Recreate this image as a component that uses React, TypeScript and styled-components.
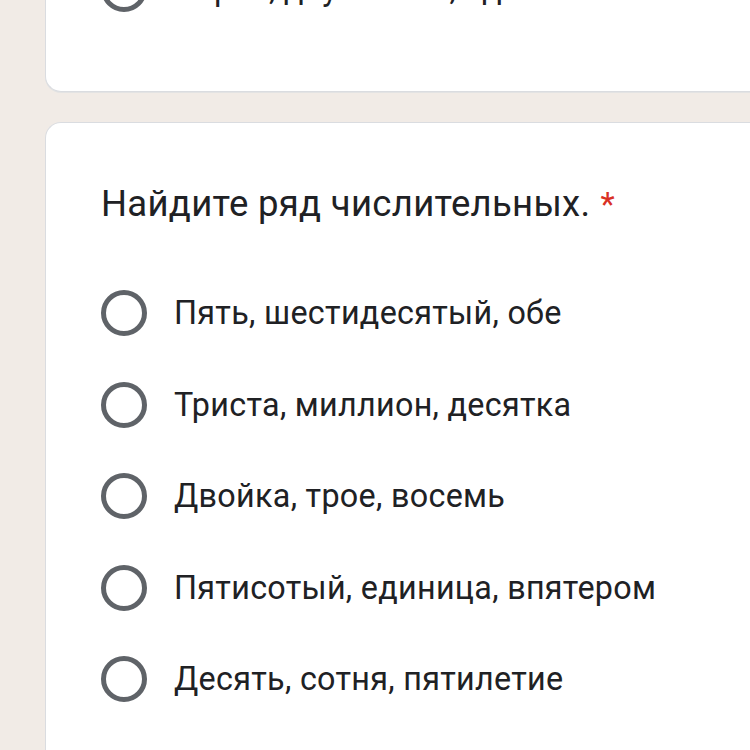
import React from 'react';
import styled, { createGlobalStyle } from 'styled-components';

const GlobalStyle = createGlobalStyle`
  html, body {
    margin: 0;
    padding: 0;
    background: #f1ebe6;
    overflow: hidden;
  }
  body {
    font-family: Roboto, "Liberation Sans", Arial, sans-serif;
  }
`;

const Page = styled.div`
  width: 750px;
  height: 750px;
  overflow: hidden;
  display: flex;
  flex-direction: column;
  gap: 30px;
  padding-left: 45px;
  box-sizing: border-box;
`;

const Card = styled.div<{ $top?: boolean }>`
  background: #fff;
  border: 1px solid #dadce0;
  border-right: none;
  border-radius: ${(p) => (p.$top ? '0 0 0 16px' : '16px 0 0 0')};
  ${(p) => (p.$top ? 'border-top: none;' : 'border-bottom: none;')}
  box-shadow: ${(p) => (p.$top ? '0 1px 0 #e3e3e3' : 'none')};
  margin-top: ${(p) => (p.$top ? '-40px' : '0')};
  padding: ${(p) => (p.$top ? '6px 0 79px 55px' : '58px 0 120px 55px')};
  flex-shrink: 0;
`;

const Question = styled.div`
  font-size: 36.5px;
  color: #202124;
  line-height: 46px;
  margin-bottom: 62px;
  letter-spacing: 0.3px;
`;

const Star = styled.span`
  color: #d93025;
  margin-left: 10px;
  font-size: 33px;
`;

const Options = styled.div`
  display: flex;
  flex-direction: column;
  gap: 45.5px;
`;

const Row = styled.div`
  display: flex;
  align-items: center;
  gap: 27px;
  height: 46px;
`;

const Radio = styled.div`
  width: 46px;
  height: 46px;
  border: 5px solid #5f6368;
  border-radius: 50%;
  box-sizing: border-box;
  flex-shrink: 0;
`;

const Label = styled.span`
  font-size: 32.3px;
  color: #202124;
  white-space: nowrap;
  letter-spacing: 0.3px;
`;

const options = [
  'Пять, шестидесятый, обе',
  'Триста, миллион, десятка',
  'Двойка, трое, восемь',
  'Пятисотый, единица, впятером',
  'Десять, сотня, пятилетие',
];

const App: React.FC = () => (
  <>
    <GlobalStyle />
    <Page>
      <Card $top>
        <Row>
          <Radio />
          <Label>Сорок, двухсотый, один</Label>
        </Row>
      </Card>
      <Card>
        <Question>
          Найдите ряд числительных.
          <Star>*</Star>
        </Question>
        <Options>
          {options.map((o) => (
            <Row key={o}>
              <Radio />
              <Label>{o}</Label>
            </Row>
          ))}
        </Options>
      </Card>
    </Page>
  </>
);

export default App;
